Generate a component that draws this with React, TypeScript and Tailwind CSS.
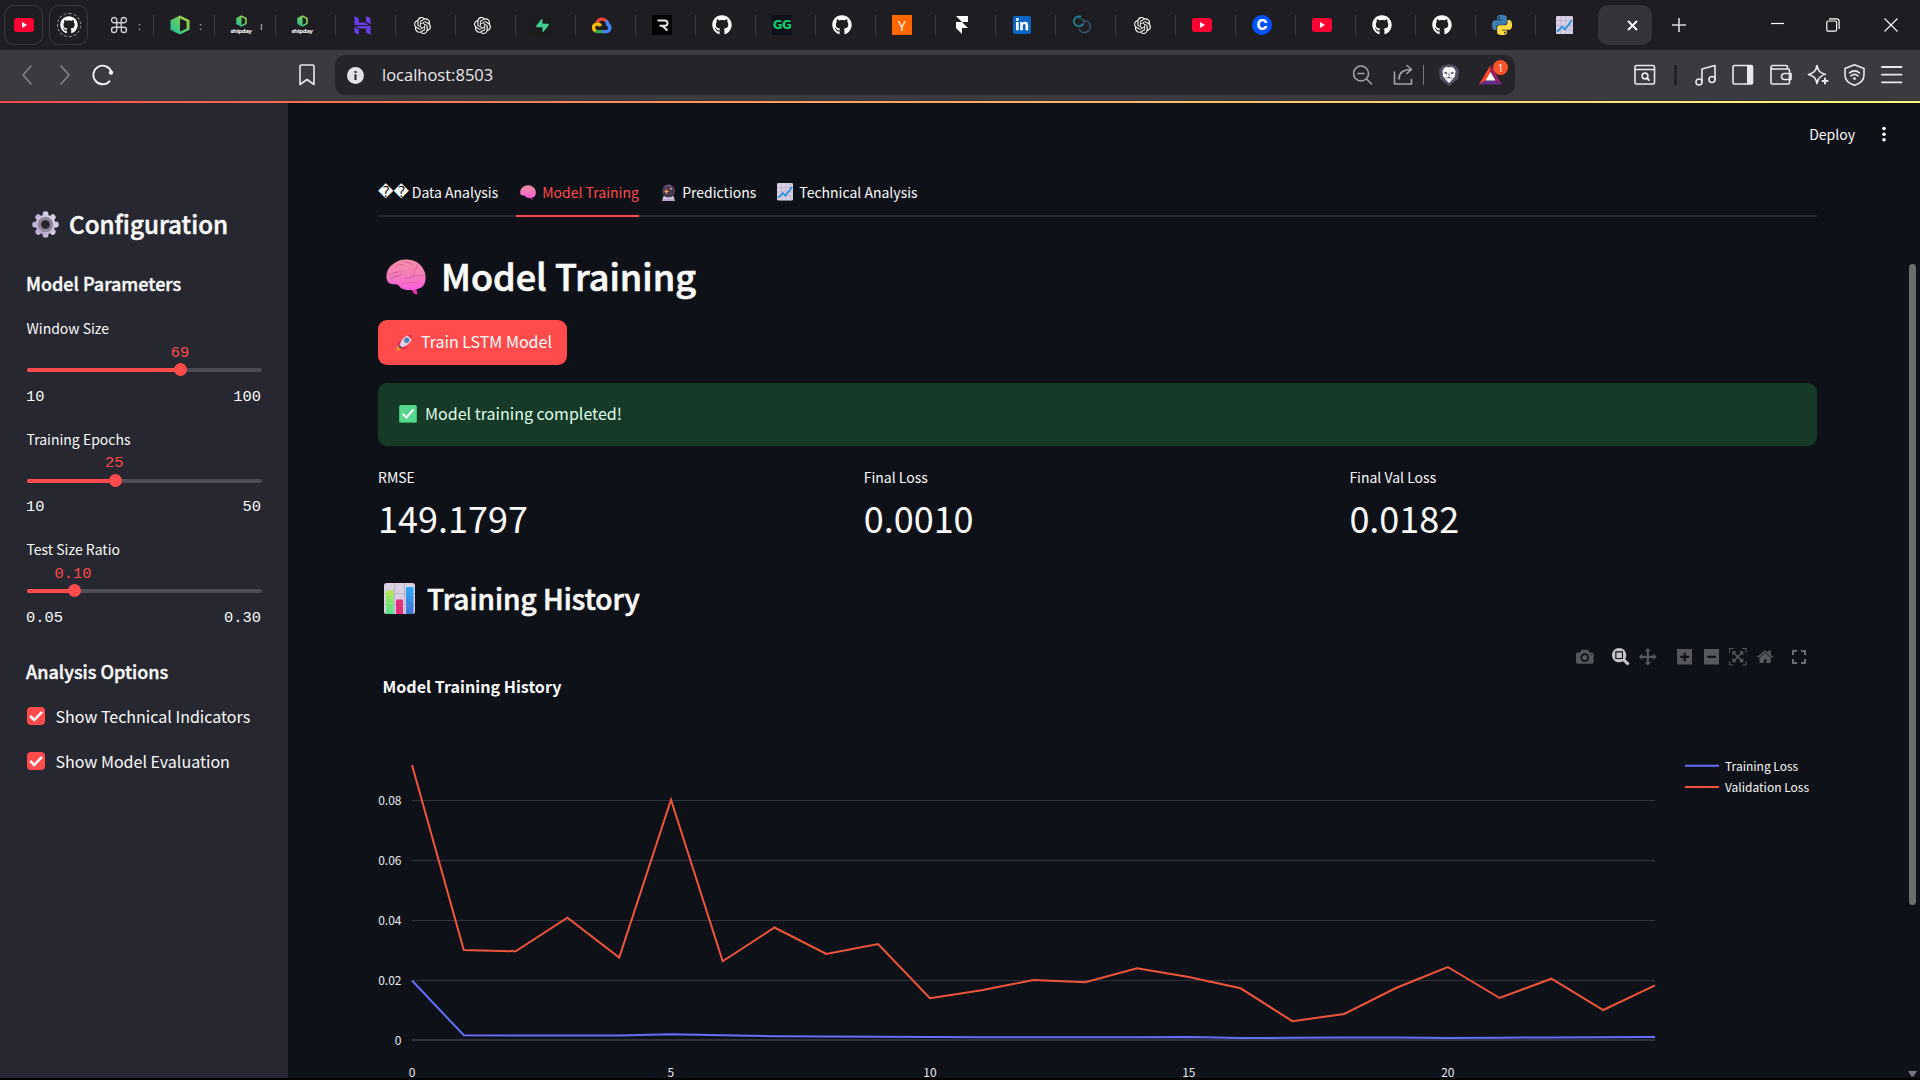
import React, { ReactNode } from "react";
import { FaGithub, FaLinkedinIn } from "react-icons/fa";
import { SiOpenai, SiSupabase, SiHostinger, SiFramer } from "react-icons/si";

/* ---------- favicons ---------- */

const YouTube = () => (
  <svg width="20" height="14" viewBox="0 0 20 14">
    <rect width="20" height="14" rx="3" fill="#ff0033" />
    <path d="M8 4v6l5-3z" fill="#fff" />
  </svg>
);

const GitHub = () => <FaGithub size={20} color="#fff" />;
const OpenAi = () => <SiOpenai size={17} color="#fff" />;

const Hexagon = ({ w, h }: { w: number; h: number }) => (
  <svg width={w} height={h} viewBox="0 0 20 20" preserveAspectRatio="none">
    <defs>
      <linearGradient id="hexFill" x1="1" y1="0" x2="0" y2="1">
        <stop offset="0" stopColor="#c5d93a" />
        <stop offset="0.5" stopColor="#5cc96a" />
        <stop offset="1" stopColor="#16c0a0" />
      </linearGradient>
    </defs>
    <path d="M10 0.5 19.5 5.2v9.6L10 19.5 0.5 14.8V5.2z" fill="url(#hexFill)" />
    <path d="M10 3.4 16.6 6.6v6.8L10 16.6z" fill="#1c1f22" />
  </svg>
);

const Shipday = () => (
  <div className="flex w-5 flex-col items-center">
    <Hexagon w={11} h={12} />
    <span className="font-['Noto_Sans'] text-[6px] leading-[8px] font-bold tracking-[-0.3px] text-white">shipday</span>
  </div>
);

const GoogleCloud = () => (
  <svg width="20" height="17" viewBox="0 0 20 17" fill="none" strokeWidth="3.4">
    <path d="M5 5.2A5.6 5.6 0 0 1 14.4 4.2" stroke="#ea4335" />
    <path d="M14 3.8A6 6 0 0 1 15.8 7.6 3.7 3.7 0 0 1 14.6 14.6H10" stroke="#4285f4" />
    <path d="M10.4 14.6H5.6a3.8 3.8 0 0 1-2.5-1" stroke="#34a853" />
    <path d="M3.6 14A3.7 3.7 0 1 1 8.6 9.2" stroke="#fbbc05" />
  </svg>
);

const Render = () => (
  <svg width="20" height="20" viewBox="0 0 20 20">
    <rect width="20" height="20" fill="#000" />
    <path d="M5.5 5.5H13a2.6 2.6 0 0 1 0 5.2H7.5M10.5 11l5 4.5" fill="none" stroke="#e6e6ea" strokeWidth="2" />
  </svg>
);

const Rings = () => (
  <svg width="20" height="20" viewBox="0 0 20 20" fill="none" strokeWidth="1.7">
    <path d="M11.5 8.5A5 5 0 1 1 8.8 1.6" stroke="#1f8a99" />
    <path d="M6 3a5 5 0 0 1 6 5" stroke="#245561" />
    <path d="M12 5.5A6 6 0 1 1 6.8 14" stroke="#3a5570" />
  </svg>
);

const Python = () => (
  <svg width="20" height="20" viewBox="0 0 24 24">
    <path fill="#3d7fb5" d="M14.25.18l.9.2.73.26.59.3.45.32.34.34.25.34.16.33.1.3.04.26.02.2-.01.13V8.5l-.05.63-.13.55-.21.46-.26.38-.3.31-.33.25-.35.19-.35.14-.33.1-.3.07-.26.04-.21.02H8.77l-.69.05-.59.14-.5.22-.41.27-.33.32-.27.35-.2.36-.15.37-.1.35-.07.32-.04.27-.02.21v3.06H3.17l-.21-.03-.28-.07-.32-.12-.35-.18-.36-.26-.36-.36-.35-.46-.32-.59-.28-.73-.21-.88-.14-1.05-.05-1.23.06-1.22.16-1.04.24-.87.32-.71.36-.57.4-.44.42-.33.42-.24.4-.16.36-.1.32-.05.24-.01h.16l.06.01h8.16v-.83H6.18l-.01-2.75-.02-.37.05-.34.11-.31.17-.28.25-.26.31-.23.38-.2.44-.18.51-.15.58-.12.64-.1.71-.06.77-.04.84-.02 1.27.05zm-6.3 1.98l-.23.33-.08.41.08.41.23.34.33.22.41.09.41-.09.33-.22.23-.34.08-.41-.08-.41-.23-.33-.33-.22-.41-.09-.41.09z" />
    <path fill="#ffdc45" d="M21.04 6.11l.28.06.32.12.35.18.36.27.36.35.35.47.32.59.28.73.21.88.14 1.04.05 1.23-.06 1.23-.16 1.04-.24.86-.32.71-.36.57-.4.45-.42.33-.42.24-.4.16-.36.09-.32.05-.24.02-.16-.01h-8.22v.82h5.84l.01 2.76.02.36-.05.34-.11.31-.17.29-.25.25-.31.24-.38.2-.44.17-.51.15-.58.13-.64.09-.71.07-.77.04-.84.01-1.27-.04-1.07-.14-.9-.2-.73-.25-.59-.3-.45-.33-.34-.34-.25-.34-.16-.33-.1-.3-.04-.25-.02-.2.01-.13v-5.34l.05-.64.13-.54.21-.46.26-.38.3-.32.33-.24.35-.2.35-.14.33-.1.3-.06.26-.04.21-.02.13-.01h5.84l.69-.05.59-.14.5-.21.41-.28.33-.32.27-.35.2-.36.15-.36.1-.35.07-.32.04-.28.02-.21V6.07h2.09l.14.01zm-6.47 14.25l-.23.33-.08.41.08.41.23.33.33.23.41.08.41-.08.33-.23.23-.33.08-.41-.08-.41-.23-.33-.33-.23-.41-.08-.41.08z" />
  </svg>
);

/* ---------- emoji drawings ---------- */

const ChartUp = ({ size = 17 }: { size?: number }) => (
  <svg width={size} height={size * 1.1} viewBox="0 0 18 20" preserveAspectRatio="none">
    <rect width="18" height="20" rx="1.6" fill="#d9d0e6" />
    <path d="M5 0v20M10 0v20M15 0v20M0 5h18M0 10h18M0 15h18" stroke="#b9aecb" strokeWidth="0.8" />
    <path d="M1 17l5.5-5.5 3 2.8L17 4.5" fill="none" stroke="#1c8fe0" strokeWidth="1.8" />
  </svg>
);

const Gear = () => (
  <svg width="27" height="27" viewBox="0 0 27 27">
    <defs>
      <linearGradient id="gearFill" x1="1" y1="0" x2="0" y2="1">
        <stop offset="0" stopColor="#e3dcec" />
        <stop offset="1" stopColor="#b3a0cf" />
      </linearGradient>
    </defs>
    <g fill="url(#gearFill)">
      {[0, 45, 90, 135].map((a) => (
        <rect key={a} x="10.6" y="0.3" width="5.8" height="26.4" rx="2.6" transform={`rotate(${a} 13.5 13.5)`} />
      ))}
      <circle cx="13.5" cy="13.5" r="9.8" />
    </g>
    <circle cx="13.5" cy="13.5" r="6.2" fill="none" stroke="#8d8496" strokeWidth="3" />
    <circle cx="13.5" cy="13.5" r="4.5" fill="#262730" />
  </svg>
);

const Brain = ({ w, h }: { w: number; h: number }) => (
  <svg width={w} height={h} viewBox="0 0 40 37" preserveAspectRatio="none">
    <defs>
      <linearGradient id="brainFill" x1="0.5" y1="0" x2="0.5" y2="1">
        <stop offset="0" stopColor="#f490a5" />
        <stop offset="0.55" stopColor="#f47cba" />
        <stop offset="1" stopColor="#ff5ce6" />
      </linearGradient>
    </defs>
    <path d="M30 29l1.5 7.5c-3 0-5-2-6-6z" fill="#e62fa6" />
    <path d="M20 .6C26 .3 31 2.500 34.500 6.500 38.500 10.500 40 16 39.500 21 39 26 37 29.500 32 30.500 27 32.500 17 33 13.500 28.500 13 26.500 11 25.500 8 26 2.500 26.500 0 22 .5 17 1 12 3 8 7.500 5 11 2 15 .8 20 .6z" fill="url(#brainFill)" />
    <path d="M9 9c2-4 7-4.500 9-2M18 2.500c3 2.500 7 .5 9 3.500M3 17c3-4 9-2.500 12-5M31 6c1 4-4 5-3 9M39 18c-4-3-8 0-12-1M15 28c1-4 7-4 10-4s6 1 8-1M28 17c-2 3-6 2-9 3" fill="none" stroke="#d9609f" strokeWidth="1" strokeLinecap="round" />
    <path d="M5 20c3-3 8-2 11-5" fill="none" stroke="#c05fb0" strokeWidth="0.900" strokeLinecap="round" />
  </svg>
);

const CrystalBall = () => (
  <svg width="15" height="17" viewBox="0 0 15 17">
    <path d="M2.500 12h10l1.600 5H.9z" fill="#b9a8cf" />
    <path d="M3 12.500h9l.8 2H2.200z" fill="#e4dcf0" />
    <circle cx="7.500" cy="6.900" r="6.700" fill="#43384f" />
    <path d="M3.500 3.500a6 6 0 0 1 7-1.500" stroke="#7b6a92" fill="none" />
    <path d="M5.500 4.500l.8 2.200 2.200.8-2.200.8-.8 2.200-.8-2.200-2.200-.8 2.200-.8z" fill="#f5a855" />
    <path d="M10 3l.5 1.200 1.200.5-1.200.5L10 6.400l-.5-1.200-1.200-.5 1.200-.5z" fill="#f5b070" />
  </svg>
);

const Rocket = () => (
  <svg width="18" height="18" viewBox="0 0 18 18">
    <path d="M3 11.500 0.500 17.500 6.500 15z" fill="#f59a2e" />
    <path d="M3.500 7.500 8 5.500 6.500 11 2 11.500zM10.500 14.500 12.500 10 7 11.500 6.500 16z" fill="#d92f50" />
    <path d="M17.500.5C13 .5 9 2.500 6.500 6.500L4.500 11 7 13.500 11.500 11.500C15.500 9 17.500 5 17.500.5z" fill="#dcd3e8" />
    <path d="M17.500.5c-2 0-3.600.4-5 1L16.500 5.500c.6-1.400 1-3 1-5z" fill="#e0364f" />
    <circle cx="11.700" cy="6.300" r="2.300" fill="#2f8fd8" stroke="#6b6680" strokeWidth="0.700" />
    <path d="M4 12l2 2" stroke="#4a4658" strokeWidth="2" />
  </svg>
);

const CheckMark = () => (
  <svg width="18" height="18" viewBox="0 0 18 18">
    <rect width="18" height="18" rx="1.500" fill="#2da65c" />
    <rect x="0.500" y="0" width="17" height="17" rx="1.500" fill="#55d88b" />
    <path d="M4 9.200l3.300 3.300L14 5" fill="none" stroke="#fff" strokeWidth="1.900" strokeLinecap="round" />
  </svg>
);

const BarChart = () => (
  <svg width="31" height="31" viewBox="0 0 31 31">
    <defs>
      <linearGradient id="barGreen" x1="0" y1="0" x2="0" y2="1">
        <stop offset="0" stopColor="#b4e84c" />
        <stop offset="1" stopColor="#4fe08c" />
      </linearGradient>
      <linearGradient id="barBlue" x1="0" y1="0" x2="0" y2="1">
        <stop offset="0" stopColor="#2fa9f7" />
        <stop offset="1" stopColor="#3f74d4" />
      </linearGradient>
    </defs>
    <rect width="31" height="31" rx="2.500" fill="#dad2e3" />
    <path d="M10.500 0v31M20.500 0v31M0 10.500h31M0 21.500h31" stroke="#bcb2c9" strokeWidth="1.200" />
    <path d="M2 31V8.500a1 1 0 0 1 1-1h5.500a1 1 0 0 1 1 1V31z" fill="url(#barGreen)" />
    <path d="M12 31V17.500a1 1 0 0 1 1-1h5a1 1 0 0 1 1 1V31z" fill="#e0317a" />
    <path d="M22 31V5a1 1 0 0 1 1-1h5.500a1 1 0 0 1 1 1V31z" fill="url(#barBlue)" />
  </svg>
);

/* ---------- browser chrome ---------- */

const tabs: ReactNode[] = [
  <GitHub />,
  <span className="flex h-5 w-5 items-center justify-center bg-[#0c111b] font-['DejaVu_Sans'] text-[12px] font-bold tracking-[-0.500px] text-[#0cce6b]">GG</span>,
  <GitHub />,
  <span className="flex h-5 w-5 items-center justify-center bg-[#ff6600] font-['Open_Sans'] text-[14px] text-white">Y</span>,
  <SiFramer size={18} color="#fff" />,
  <span className="flex h-[18px] w-[18px] items-center justify-center rounded-[2px] bg-[#0a66c2]"><FaLinkedinIn size={14} color="#fff" /></span>,
  <Rings />,
  <OpenAi />,
  <YouTube />,
  <span className="flex h-5 w-5 items-center justify-center rounded-full bg-[#0052ff] font-['Inter'] text-[15px] font-extrabold text-white">C</span>,
  <YouTube />,
  <GitHub />,
  <GitHub />,
  <Python />,
];

function Tab({ children, className = "w-[60px]", extra }: { children: ReactNode; className?: string; extra?: string }) {
  return (
    <div className={`flex h-[20px] shrink-0 items-center border-r border-[#3c3b41] ${className}`}>
      <div className="ml-[16px] flex w-5 justify-center">{children}</div>
      {extra && <span className="ml-[9px] w-1 font-['Open_Sans'] text-[11px] leading-none text-[#c8c7cc]">{extra}</span>}
    </div>
  );
}

function TabStrip() {
  return (
    <div className="flex h-[50px] items-center bg-[#1e1d22]">
      <div className="ml-1 flex h-10 w-[39px] items-center justify-center rounded-[10px] border border-[#3a393e]"><YouTube /></div>
      <div className="mr-[5px] ml-[6px] flex h-10 w-[39px] items-center justify-center rounded-[10px] border border-[#3a393e]">
        <div className="flex h-6 w-6 items-center justify-center rounded-full border border-dashed border-[#9a999f]"><FaGithub size={18} color="#fff" /></div>
      </div>
      <Tab className="w-[61px]" extra=":">
        <svg width="18" height="18" viewBox="0 0 24 24" fill="none" stroke="#cfced3" strokeWidth="1.800">
          <path d="M15 5.500v13a3.500 3.500 0 1 0 3.500-3.500h-13A3.500 3.500 0 1 0 9 18.500v-13A3.500 3.500 0 1 0 5.500 9h13A3.500 3.500 0 1 0 15 5.500z" />
        </svg>
      </Tab>
      <Tab className="w-[61px]" extra=":"><Hexagon w={20} h={20} /></Tab>
      <Tab className="w-[61px]" extra="ı"><Shipday /></Tab>
      <Tab><Shipday /></Tab>
      <Tab><SiHostinger size={19} color="#673de6" /></Tab>
      <Tab><OpenAi /></Tab>
      <Tab><OpenAi /></Tab>
      <Tab><span className="flex h-5 w-5 items-center justify-center bg-[#1c1c1c]"><SiSupabase size={13} color="#3ecf8e" /></span></Tab>
      <Tab><GoogleCloud /></Tab>
      <Tab><Render /></Tab>
      {tabs.map((t, i) => <Tab key={i}>{t}</Tab>)}
      <div className="flex w-[60px] shrink-0"><div className="ml-[20px]"><ChartUp size={17} /></div></div>
      <div className="ml-[2px] flex h-10 w-[54px] shrink-0 items-center rounded-[10px] bg-[#353439]">
        <svg className="ml-[29px]" width="11" height="11" viewBox="0 0 11 11" stroke="#fff" strokeWidth="1.800"><path d="M1 1l9 9M10 1l-9 9" /></svg>
      </div>
      <svg className="ml-5" width="14" height="14" viewBox="0 0 14 14" stroke="#d8d7db" strokeWidth="1.600"><path d="M7 0v14M0 7h14" /></svg>
      <svg className="ml-[85px]" width="13" height="14" viewBox="0 0 13 14" stroke="#fff" strokeWidth="1.200"><path d="M0 5.500h13" /></svg>
      <svg className="ml-[42px]" width="14" height="14" viewBox="0 0 14 14" fill="none" stroke="#fff" strokeWidth="1.200"><rect x="0.800" y="3" width="9.800" height="10.200" rx="1.500" /><path d="M3 .8h7.500a2.600 2.600 0 0 1 2.600 2.600V11" /></svg>
      <svg className="ml-[44px]" width="14" height="14" viewBox="0 0 14 14" stroke="#fff" strokeWidth="1.100"><path d="M.5.5l13 13M13.500.5l-13 13" /></svg>
    </div>
  );
}

function ToolIcon({ className, children, w = 22, color = "#e9e8ec" }: { className?: string; children: ReactNode; w?: number; color?: string }) {
  return (
    <svg className={`shrink-0 ${className ?? ""}`} width={w} height="22" viewBox={`0 0 ${w} 22`} fill="none" stroke={color} strokeWidth="1.600" strokeLinecap="round" strokeLinejoin="round">{children}</svg>
  );
}

function Toolbar() {
  return (
    <div className="flex h-[51px] items-center border-b border-[#333237] bg-[#3b3a3f]">
      <ToolIcon className="ml-[16px]" color="#858489"><path d="M15 2 7 11l8 9" /></ToolIcon>
      <ToolIcon className="ml-[16px]" color="#858489"><path d="M7 2l8 9-8 9" /></ToolIcon>
      <ToolIcon className="ml-[16px]" color="#f4f3f6">
        <path d="M17.500 17.300A9.300 9.300 0 1 1 19.500 8" strokeWidth="1.900" />
        <circle cx="19" cy="8.600" r="2.200" fill="#f4f3f6" stroke="none" />
      </ToolIcon>
      <ToolIcon className="ml-[182px]"><path d="M4 2.500a1.500 1.500 0 0 1 1.500-1.500h11A1.500 1.500 0 0 1 18 2.500v18L11 15.500 4 20.500z" /></ToolIcon>
      <div className="ml-[17px] flex h-10 w-[1180px] shrink-0 items-center rounded-[10px] bg-[#252428]">
        <span className="ml-[12px] flex h-[17px] w-[17px] items-center justify-center rounded-full bg-[#e3e2e6]">
          <svg width="3" height="9" viewBox="0 0 3 9" fill="#252428"><rect x="0.500" width="2" height="2" /><rect x="0.500" y="3.300" width="2" height="5.700" /></svg>
        </span>
        <span className="ml-[18px] font-['Open_Sans'] text-[16.500px] leading-none text-[#e9e8ec]">localhost:8503</span>
        <ToolIcon className="ml-auto" w={20} color="#a5a4a9"><circle cx="8" cy="9.500" r="7.500" /><path d="M13.500 15l5 5M5 9.500h6" /></ToolIcon>
        <ToolIcon className="ml-[20px]" w={21} color="#a5a4a9"><path d="M1.500 8v12h17v-4.500M6 15c0-6 4-9.500 12-9.500M14 1.500l4.500 4-4.500 4" /></ToolIcon>
        <span className="ml-[9px] h-5 w-[1.500px] bg-[#77767b]" />
        <span className="ml-[15px] h-[22px] w-5">
          <svg width="20" height="22" viewBox="0 0 20 22">
            <path d="M10 0 17 2l3 4-1 9-9 7-9-7L0 6l3-4z" fill="#4d4f63" />
            <path d="M10 3.500l2.500-.8 2.500 1.500 1.700 3-.7 2.800.2 2-3.200 4L10 19l-3-3-3.200-4 .2-2-.7-2.800 1.700-3 2.500-1.500z" fill="#fafafc" />
            <path d="M5.300 7.800l3.200.9-.7 1.600-2.200-.8zM14.700 7.800l-3.200.9.700 1.600 2.200-.8zM8.300 13.500l1.700 1 1.700-1-1.700-1z" fill="#4d4f63" />
            <path d="M6.500 13l2 2M13.500 13l-2 2M10 9v3" stroke="#4d4f63" strokeWidth="0.700" />
          </svg>
        </span>
        <span className="relative mr-[13px] ml-[20px] h-[22px] w-[23px]">
          <svg width="23" height="22" viewBox="0 0 23 22">
            <path d="M11.500 1 0 20.500 6.500 16.500 11.500 8z" fill="#ff4724" />
            <path d="M11.500 1 23 20.500 16.500 16.500 11.500 8z" fill="#9e1f63" />
            <path d="M0 20.500h23L16.500 16.500h-10z" fill="#662d91" />
            <path d="M11.500 8 16.500 16.500h-10z" fill="#fff" />
          </svg>
          <span className="absolute top-[-4px] left-[14px] flex h-[15px] w-[15px] items-center justify-center rounded-full bg-[#fb542b] font-['Open_Sans'] text-[10px] leading-none text-white">1</span>
        </span>
      </div>
      <ToolIcon className="ml-[119px]"><rect x="1" y="1.500" width="19.500" height="18.500" rx="1.500" /><path d="M1 5.500h19.500" /><circle cx="11" cy="12" r="2.900" /><path d="M13 14.200l1.800 1.800" strokeWidth="2" /></ToolIcon>
      <span className="ml-[18px] h-5 w-[2.500px] bg-[#232227]" />
      <ToolIcon className="ml-[18px]"><circle cx="4" cy="18" r="3" /><circle cx="17" cy="15.500" r="3" /><path d="M7 18V5l13-3.500v14" /></ToolIcon>
      <ToolIcon className="ml-[15px]"><rect x="1" y="1.500" width="19.500" height="18.500" rx="1.500" /><rect x="15" y="1.500" width="6" height="18.500" fill="#e9e8ec" stroke="none" /></ToolIcon>
      <ToolIcon className="ml-[16px]"><path d="M1 4v14.500A1.500 1.500 0 0 0 2.500 20H18a1.500 1.500 0 0 0 1.500-1.500V6.500A1.500 1.500 0 0 0 18 5H2.500A1.700 1.700 0 0 1 1 3.300 1.800 1.800 0 0 1 2.800 1.500H16A1.500 1.500 0 0 1 17.500 3v2M21 9.500h-6.500a3 3 0 0 0 0 6H21z" /></ToolIcon>
      <ToolIcon className="ml-[15px]"><path d="M10 1.500c1.200 5.500 3 7.500 8.500 9-5.500 1.500-7.300 3.500-8.500 9-1.200-5.500-3-7.500-8.500-9 5.500-1.500 7.300-3.500 8.500-9z" /><path d="M18 13.500v7M14.500 17h7" strokeWidth="5" stroke="#3b3a3f" /><path d="M18 14.500v5M15.500 17h5" strokeWidth="2" /></ToolIcon>
      <ToolIcon className="ml-[15px]"><path d="M10.500.8 20 4.500V11c0 5-4 8.500-9.500 10.300C5 19.500 1 16 1 11V4.500z" /><path d="M5.500 8.800c3-2.300 7-2.300 10 0M7 11.800c2-1.600 5-1.600 7 0" /><circle cx="10.500" cy="14.600" r="1.400" fill="#e9e8ec" stroke="none" /></ToolIcon>
      <ToolIcon className="ml-[15px]"><path d="M1 3h19.500M1 10.700h19.500M1 18.300h19.500" strokeWidth="1.800" /></ToolIcon>
    </div>
  );
}

/* ---------- sidebar ---------- */

const sliders = [
  { label: "Window Size", value: "69", at: 65.53, min: "10", max: "100" },
  { label: "Training Epochs", value: "25", at: 37.5, min: "10", max: "50" },
  { label: "Test Size Ratio", value: "0.10", at: 20, min: "0.05", max: "0.30" },
];

function Slider({ label, value, at, min, max }: (typeof sliders)[number]) {
  return (
    <div className="h-[110.500px]">
      <div className="-ml-px h-5 pl-[0.500px] text-[14px] leading-5">{label}</div>
      <div className="relative mt-[23px] h-[18px]">
        <div className="absolute top-[7px] h-[4px] w-full overflow-hidden rounded-full bg-[#4b4c56]">
          <div className="h-full bg-[#ff4b4b]" style={{ width: `${at}%` }} />
        </div>
        <div className="absolute top-[2.300px] flex w-0 justify-center" style={{ left: `${at}%` }}>
          <span className="h-[13px] w-[13px] shrink-0 rounded-full bg-[#ff4b4b]" />
        </div>
        <div className="absolute top-[-16.500px] -ml-px flex w-0 justify-center font-['Liberation_Mono'] text-[15.400px] leading-4 text-[#ff4b4b]" style={{ left: `${at}%` }}>{value}</div>
      </div>
      <div className="mt-[9.500px] -ml-px flex h-4 justify-between pr-px font-['Liberation_Mono'] text-[15.400px] leading-4"><span>{min}</span><span>{max}</span></div>
    </div>
  );
}

function Option({ label }: { label: string }) {
  return (
    <div className="flex h-[45px] items-center">
      <span className="flex h-[18px] w-[18px] items-center justify-center rounded-[4px] bg-[#ff4b4b]">
        <svg width="14" height="12" viewBox="0 0 14 12" fill="none" stroke="#fff" strokeWidth="2.500"><path d="M1.200 6l4 4L13 1.800" /></svg>
      </span>
      <span className="mb-px ml-[10.500px] text-[16.050px] leading-5">{label}</span>
    </div>
  );
}

function Sidebar() {
  return (
    <aside className="w-[288px] shrink-0 bg-[#262730] pr-[26px] pl-[27px]">
      <h2 className="mt-[101px] flex h-10 items-center text-[24.200px] leading-10 font-medium [-webkit-text-stroke:0.500px_#fafafa]">
        <span className="ml-[5px]"><Gear /></span>
        <span className="ml-[10px]">Configuration</span>
      </h2>
      <h3 className="mt-[27px] -ml-px h-6 text-[18px] leading-6 font-medium [-webkit-text-stroke:0.400px_#fafafa]">Model Parameters</h3>
      <div className="mt-[23px]">{sliders.map((s) => <Slider key={s.label} {...s} />)}</div>
      <h3 className="mt-[9px] -ml-px h-6 text-[18px] leading-6 font-medium [-webkit-text-stroke:0.400px_#fafafa]">Analysis Options</h3>
      <div className="mt-[11px]">
        <Option label="Show Technical Indicators" />
        <Option label="Show Model Evaluation" />
      </div>
    </aside>
  );
}

/* ---------- chart ---------- */

const validation = [765, 950, 951.3, 917.7, 957.5, 799.8, 961.3, 927.5, 954, 944, 998.2, 990.3, 980, 982.2, 968.3, 977, 988.3, 1021.2, 1014, 988, 967, 998, 978.7, 1010, 985.3];
const training = [980.5, 1035.3, 1035.4, 1035.5, 1035.6, 1034.2, 1035.3, 1036.3, 1036.5, 1036.8, 1037, 1037.2, 1037.3, 1037.2, 1037.2, 1037, 1038, 1037.8, 1037.5, 1037.4, 1038, 1037.7, 1037.4, 1037.2, 1036.9];
const toPoints = (ys: number[]) => ys.map((y, i) => `${(412 + i * 51.79).toFixed(1)},${y}`).join(" ");

const modeIcons = [
  { gap: "", w: 1000, active: false, d: "m500 450c-83 0-150-67-150-150 0-83 67-150 150-150 83 0 150 67 150 150 0 83-67 150-150 150z m400 150h-120c-16 0-34 13-39 29l-31 93c-6 15-23 28-40 28h-340c-16 0-34-13-39-28l-31-94c-6-15-23-28-40-28h-120c-55 0-100-45-100-100v-450c0-55 45-100 100-100h800c55 0 100 45 100 100v450c0 55-45 100-100 100z m-400-550c-138 0-250 112-250 250 0 138 112 250 250 250 138 0 250-112 250-250 0-138-112-250-250-250z m365 380c-19 0-35 16-35 35 0 19 16 35 35 35 19 0 35-16 35-35 0-19-16-35-35-35z" },
  { gap: "ml-[18.500px]", w: 1000, active: true, d: "m1000-25l-250 251c40 63 63 138 63 218 0 224-182 406-407 406-224 0-406-182-406-406s183-406 407-406c80 0 155 22 218 62l250-250 125 125z m-812 250l0 438 437 0 0-438-437 0z m62 375l313 0 0-312-313 0 0 312z" },
  { gap: "ml-[9.500px]", w: 1000, active: false, d: "m1000 350l-187 188 0-125-250 0 0 250 125 0-188 187-187-187 125 0 0-250-250 0 0 125-188-188 186-187 0 125 252 0 0-250-125 0 187-188 188 188-125 0 0 250 250 0 0-126 187 188z" },
  { gap: "ml-[20px]", w: 875, active: false, d: "m1 787l0-875 875 0 0 875-875 0z m687-500l-187 0 0-187-125 0 0 187-188 0 0 125 188 0 0 187 125 0 0-187 187 0 0-125z" },
  { gap: "ml-[11.500px]", w: 875, active: false, d: "m0 788l0-876 875 0 0 876-875 0z m688-500l-500 0 0 125 500 0 0-125z" },
  { gap: "ml-[10px]", w: 1000, active: false, d: "m250 850l-187 0-63 0 0-62 0-188 63 0 0 188 187 0 0 62z m688 0l-188 0 0-62 188 0 0-188 62 0 0 188 0 62-62 0z m-875-938l0 188-63 0 0-188 0-62 63 0 187 0 0 62-187 0z m875 188l0-188-188 0 0-62 188 0 62 0 0 62 0 188-62 0z m-125 188l-1 0-93-94-156 156 156 156 92-93 2 0 0 250-250 0 0-2 93-92-156-156-156 156 94 92 0 2-250 0 0-250 0 0 93 93 157-156-157-156-93 94 0 0 0-250 250 0 0 0-94 93 156 157 156-157-93-93 0 0 250 0 0 250z" },
  { gap: "ml-[10px]", w: 928.6, active: false, d: "m786 296v-267q0-15-11-26t-25-10h-214v214h-143v-214h-214q-15 0-25 10t-11 26v267q0 1 0 2t0 2l321 264 321-264q1-1 1-4z m124 39l-34-41q-5-5-12-6h-2q-7 0-12 3l-386 322-386-322q-7-4-13-4-7 2-12 7l-35 41q-4 5-3 13t6 12l401 334q18 15 42 15t43-15l136-114v109q0 8 5 13t13 5h107q8 0 13-5t5-13v-227l122-102q5-5 6-12t-4-13z" },
];

function ModeBar() {
  return (
    <div className="flex h-[34px] items-center justify-end pr-[11px]">
      {modeIcons.map((m, i) => (
        <svg key={i} className={m.gap} height="17.600" width={(m.w / 1000) * 17.6} viewBox={`0 0 ${m.w} 1000`}>
          <path transform="matrix(1 0 0 -1 0 850)" d={m.d} fill={m.active ? "#c3c4c6" : "#56585c"} />
        </svg>
      ))}
      <svg className="ml-[19px]" width="14" height="14" viewBox="0 0 14 14" fill="none" stroke="#6b6d70" strokeWidth="2">
        <path d="M1 5V1h4M9 1h4v4M13 9v4H9M5 13H1V9" />
      </svg>
    </div>
  );
}

function LossChart() {
  return (
    <svg className="block overflow-visible" width="1439" height="404" viewBox="378 674 1439 404" fill="#fafafa" fontSize="12">
      <text x="382.500" y="693" fontSize="16.100" fontWeight="700">Model Training History</text>
      {["0.08", "0.06", "0.04", "0.02"].map((t, i) => (
        <g key={t}>
          <rect x="412" y={800 + i * 60} width="1243" height="1" fill="#31333f" />
          <text x="401.500" y={805 + i * 60} textAnchor="end" fill="#e6eaf1">{t}</text>
        </g>
      ))}
      <rect x="412" y="1039" width="1243" height="2" fill="#31333f" />
      <text x="401.500" y="1045" textAnchor="end" fill="#e6eaf1">0</text>
      {[0, 5, 10, 15, 20].map((n) => (
        <text key={n} x={412 + n * 51.79} y="1076.500" textAnchor="middle" fill="#e6eaf1">{n}</text>
      ))}
      <g fill="none" strokeWidth="2" strokeLinejoin="miter">
        <polyline points={toPoints(training)} stroke="#636efa" />
        <polyline points={toPoints(validation)} stroke="#ef553b" />
        <path d="M1685 765.700h34" stroke="#636efa" />
        <path d="M1685 786.900h34" stroke="#ef553b" />
      </g>
      <text x="1725" y="771">Training Loss</text>
      <text x="1725" y="792">Validation Loss</text>
    </svg>
  );
}

/* ---------- main ---------- */

const metrics = [
  { label: "RMSE", value: "149.1797" },
  { label: "Final Loss", value: "0.0010" },
  { label: "Final Val Loss", value: "0.0182" },
];

function Main() {
  return (
    <main className="flex-1 bg-[#0e1117] pl-[90px]">
      <div className="flex h-[62px] items-center justify-end pr-[23px]">
        <span className="text-[14px] leading-5">Deploy</span>
        <svg className="ml-[27px]" width="4" height="16" viewBox="0 0 4 16" fill="#fafafa"><circle cx="2" cy="2.500" r="1.800" /><circle cx="2" cy="8.200" r="1.800" /><circle cx="2" cy="13.800" r="1.800" /></svg>
      </div>
      <div className="w-[1439px]">
        <nav className="mt-1 flex h-[48px] border-b-2 border-[#26282d] text-[14px] leading-[46px]">
          <div className="flex"><span className="font-['DejaVu_Sans'] text-[15px]">��</span><span className="ml-[3px]">Data Analysis</span></div>
          <div className="ml-[18px] flex h-[48px] w-[123px] items-center border-b-2 border-[#ff4b4b] text-[#ff4b4b]">
            <span className="ml-[3.500px]"><Brain w={16} h={15} /></span><span className="ml-[6.500px]">Model Training</span>
          </div>
          <div className="ml-[22px] flex h-[46px] items-center"><CrystalBall /><span className="ml-[6px]">Predictions</span></div>
          <div className="ml-[21px] flex h-[46px] items-center"><ChartUp size={16} /><span className="ml-[6px]">Technical Analysis</span></div>
        </nav>
        <h1 className="mt-[34px] flex h-12 items-center text-[36px] leading-[48px] font-medium [-webkit-text-stroke:0.700px_#fafafa]">
          <span className="mt-[4px] ml-[8px]"><Brain w={40} h={36} /></span><span className="ml-[15px]">Model Training</span>
        </h1>
        <button className="mt-[21px] flex h-[45px] w-[189px] items-center rounded-[9px] bg-[#ff4b4b] text-[16px] leading-5 text-white">
          <span className="ml-[17px]"><Rocket /></span><span className="mb-[3px] ml-[8px]">Train LSTM Model</span>
        </button>
        <div className="mt-[18px] flex h-[63px] items-center rounded-[9px] bg-[#173928] text-[16.050px] leading-5 text-[#dffde9]">
          <span className="ml-[21px] mb-px"><CheckMark /></span><span className="mb-[3px] ml-[8px]">Model training completed!</span>
        </div>
        <div className="mt-[21px] flex">
          {metrics.map((m) => (
            <div key={m.label} className="w-[485.700px] shrink-0">
              <div className="h-5 text-[14px] leading-5">{m.label}</div>
              <div className="mt-[6px] h-12 text-[36px] leading-[48px]">{m.value}</div>
            </div>
          ))}
        </div>
        <h2 className="mt-[37px] flex h-10 items-center text-[28px] leading-10 font-medium [-webkit-text-stroke:0.600px_#fafafa]">
          <span className="ml-[6px]"><BarChart /></span><span className="ml-[12px]">Training History</span>
        </h2>
        <div className="mt-[22px]">
          <ModeBar />
          <LossChart />
        </div>
      </div>
    </main>
  );
}

export default function App() {
  return (
    <div className="flex h-[1080px] w-[1920px] flex-col overflow-hidden bg-black font-['Noto_Sans_CJK_SC','Noto_Sans',sans-serif] text-[#fafafa]">
      <TabStrip />
      <Toolbar />
      <div className="h-[2px] shrink-0 bg-linear-to-r from-[#ff4b4b] to-[#fffd80]" />
      <div className="flex h-[975px] shrink-0">
        <Sidebar />
        <Main />
        <div className="flex w-[11px] flex-col items-start bg-[#0e1117]">
          <div className="mt-[161px] h-[641px] w-[7px] rounded-full bg-[#6b6c6f]" />
          <svg className="mt-[166px] -ml-px" width="9" height="6" viewBox="0 0 9 6" fill="#77787b"><path d="M0 0h9L5.500 5.500h-2z" /></svg>
        </div>
      </div>
    </div>
  );
}
